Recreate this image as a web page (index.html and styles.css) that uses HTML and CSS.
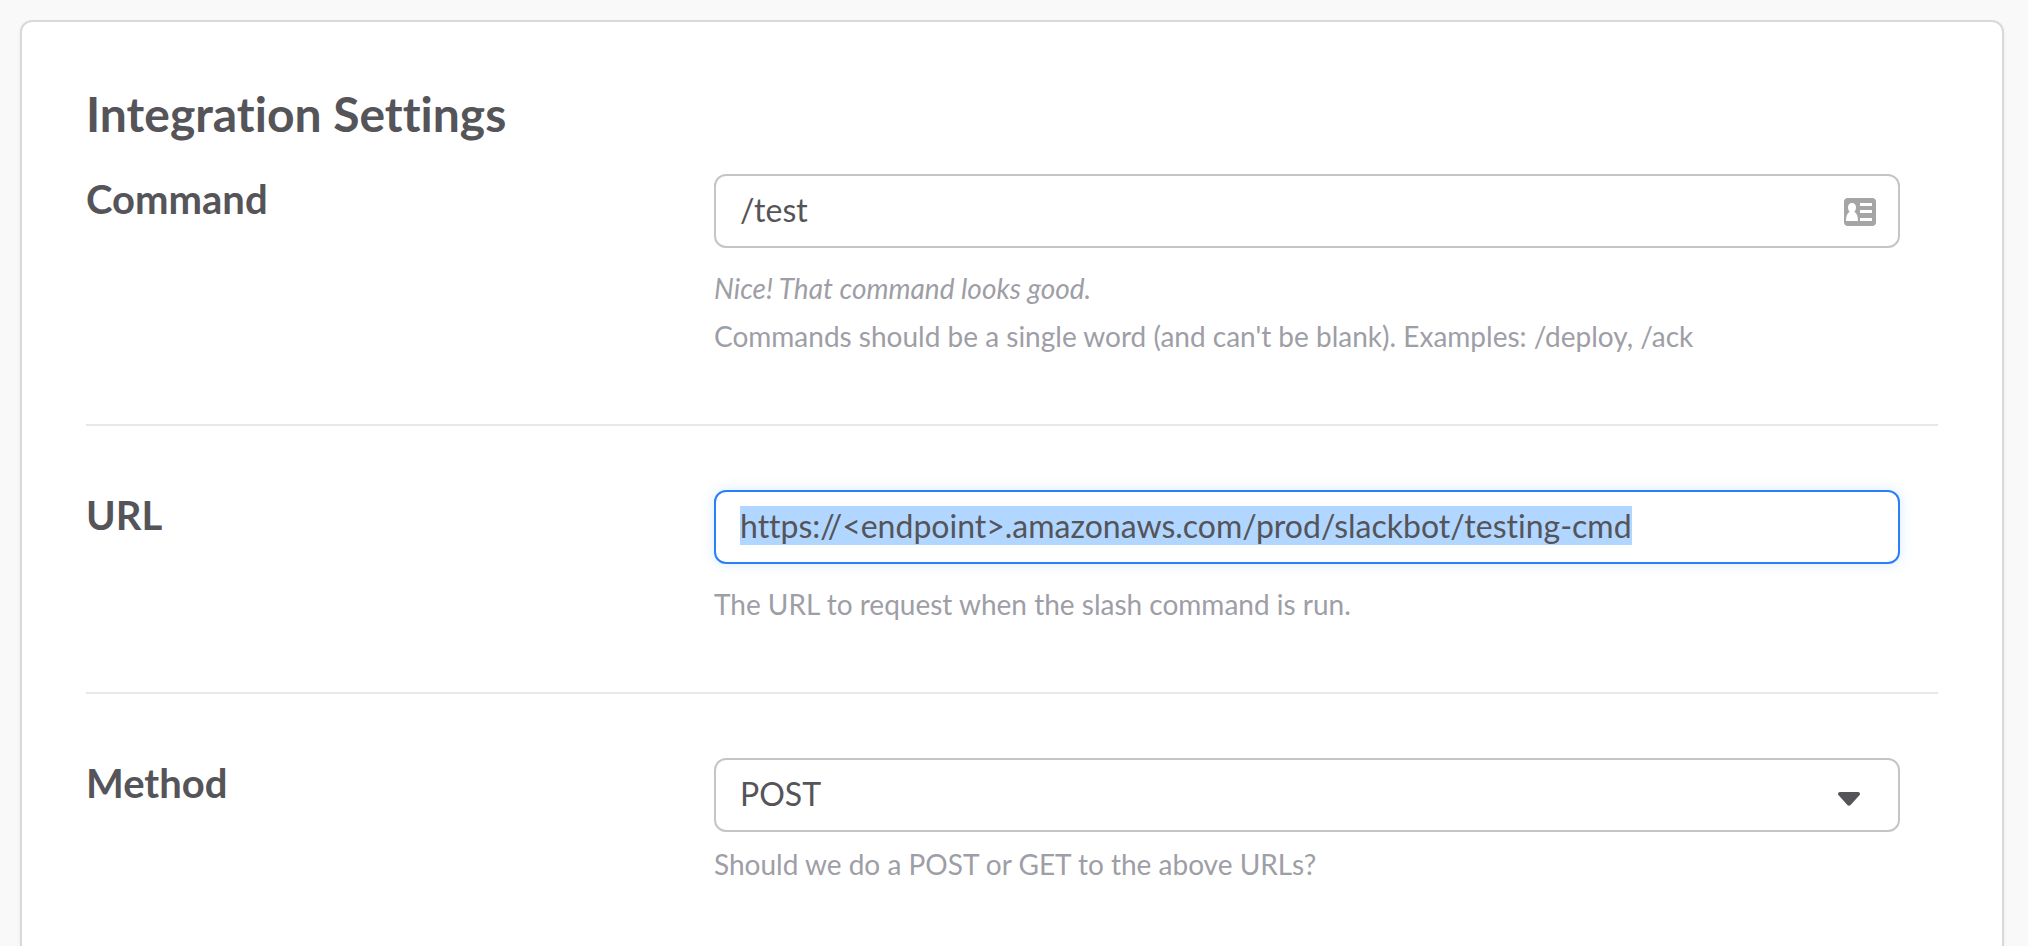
FILE: index.html
```html
<!DOCTYPE html>
<html lang="en">
<head>
<meta charset="utf-8">
<title>Integration Settings</title>
<link rel="stylesheet" href="styles.css">
</head>
<body>
<main class="card">
  <h1 class="title">Integration Settings</h1>
  <form class="settings">
    <div class="row">
      <label class="label" for="command">Command</label>
      <div class="field">
        <div class="control">
          <input class="input" id="command" type="text" value="/test" autocomplete="off">
          <svg class="contact-icon" viewBox="0 0 32 28" aria-hidden="true">
            <rect width="32" height="28" rx="4" fill="#a5a5a5"/>
            <path fill="#fff" d="M16 5h12v3H16zM16 12h12v3H16zM16 20h12v3H16zM8 5c2.500 0 4 1.800 4 4.200 0 2-.7 3.600-1.700 4.600C12.600 15 14 18 14 23H2c0-5 1.400-8 3.700-9.200C4.700 12.800 4 11.200 4 9.200 4 6.800 5.500 5 8 5z"/>
          </svg>
        </div>
        <p class="hint hint-status">Nice! That command looks good.</p>
        <p class="hint">Commands should be a single word (and can't be blank). Examples: /deploy, /ack</p>
      </div>
    </div>
    <div class="row">
      <label class="label" for="url">URL</label>
      <div class="field">
        <input class="input" id="url" type="text" value="https://&lt;endpoint&gt;.amazonaws.com/prod/slackbot/testing-cmd" spellcheck="false" autocomplete="off">
        <p class="hint">The URL to request when the slash command is run.</p>
      </div>
    </div>
    <div class="row">
      <label class="label" for="method">Method</label>
      <div class="field">
        <div class="control">
          <select class="input select" id="method">
            <option selected>POST</option>
            <option>GET</option>
          </select>
          <svg class="caret-icon" viewBox="0 0 22 14" aria-hidden="true">
            <path fill="#555459" d="M2 0h18c1.800 0 2.600 2 1.400 3.300l-8.800 9.800c-.9 1-2.300 1-3.200 0L.6 3.300C-.6 2 .2 0 2 0z"/>
          </svg>
        </div>
        <p class="hint hint-close">Should we do a POST or GET to the above URLs?</p>
      </div>
    </div>
  </form>
</main>
<script src="script.js"></script>
</body>
</html>
```
FILE: script.js
```js
const url = document.getElementById("url");
url.focus({ preventScroll: true });
url.select();
```
FILE: styles.css
```css
* {
  box-sizing: border-box;
}

html {
  scrollbar-width: none;
}

body {
  margin: 0;
  padding: 20px 24px 0 20px;
  background: #f9f9f9;
  color: #555459;
  font-family: Lato, "Open Sans", sans-serif;
  font-variant-ligatures: none;
}

.card {
  min-height: 100vh;
  padding: 64px;
  background: #fff;
  border: 2px solid #d9d9d9;
  border-radius: 12px;
  box-shadow: 0 2px 4px rgba(0, 0, 0, 0.06);
}

.title {
  margin: 0 0 32px;
  font-size: 48px;
  line-height: 56px;
  font-weight: 700;
}

.row {
  display: grid;
  grid-template-columns: 628fr 1186fr 38fr;
  padding-bottom: 64px;
  margin-bottom: 64px;
  border-bottom: 2px solid #e8e8e8;
}

.row:last-child {
  margin-bottom: 0;
  border-bottom: 0;
}

.label {
  justify-self: start;
  align-self: start;
  font-size: 40px;
  line-height: 50px;
  font-weight: 700;
}

.control {
  position: relative;
}

.input {
  display: block;
  width: 100%;
  height: 74px;
  padding: 0 24px 4px;
  border: 2px solid #c5c5c5;
  border-radius: 12px;
  background: #fff;
  color: #555459;
  font-family: inherit;
  font-size: 32px;
  font-variant-ligatures: none;
  outline: 0;
}

.input:focus {
  border-color: #2780f8;
  box-shadow: 0 0 14px rgba(39, 128, 248, 0.16);
}

.input::selection {
  background: #b1d6ff;
  color: #555459;
}

.select {
  appearance: none;
}

.contact-icon {
  position: absolute;
  top: 24px;
  right: 24px;
  width: 32px;
  height: 28px;
}

.caret-icon {
  position: absolute;
  top: 34px;
  right: 40px;
  width: 22px;
  height: 14px;
  pointer-events: none;
}

.hint {
  margin: 0;
  padding-top: 16px;
  color: #9e9ea6;
  font-size: 28px;
  line-height: 48px;
}

.hint + .hint {
  padding-top: 0;
}

.hint-status {
  font-style: italic;
}

.hint-close {
  padding-top: 8px;
}
```
